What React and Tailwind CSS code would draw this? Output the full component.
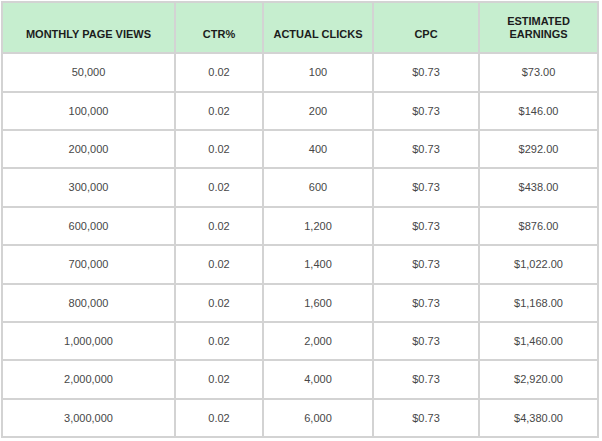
import React from "react";

const rows = [
  ["50,000", "0.02", "100", "$0.73", "$73.00"],
  ["100,000", "0.02", "200", "$0.73", "$146.00"],
  ["200,000", "0.02", "400", "$0.73", "$292.00"],
  ["300,000", "0.02", "600", "$0.73", "$438.00"],
  ["600,000", "0.02", "1,200", "$0.73", "$876.00"],
  ["700,000", "0.02", "1,400", "$0.73", "$1,022.00"],
  ["800,000", "0.02", "1,600", "$0.73", "$1,168.00"],
  ["1,000,000", "0.02", "2,000", "$0.73", "$1,460.00"],
  ["2,000,000", "0.02", "4,000", "$0.73", "$2,920.00"],
  ["3,000,000", "0.02", "6,000", "$0.73", "$4,380.00"],
];

// row heights alternate a little so the lines land where the picture has them
const heights = ["h-[39px]", "h-[38px]", "h-[38px]", "h-[39px]", "h-[38px]", "h-[39px]", "h-[38px]", "h-[38px]", "h-[39px]", "h-[38px]"];

const App = () => {
  const th = "border-r-2 border-b-2 border-[#d3d3d3] bg-[#c6eecf] align-bottom pb-[11px] px-1 text-center text-[11px] leading-[13px] font-bold text-[#1c1c1c]";
  const td = "border-r-2 border-b-2 border-[#d3d3d3] align-middle text-center text-[11px] text-[#474747]";

  return (
    <div className="w-[602px] h-[441px] bg-white pt-px pl-px" style={{ fontFamily: '"Liberation Sans", Arial, sans-serif' }}>
      <table className="w-[598px] table-fixed border-separate border-spacing-0 border-l-2 border-t-2 border-[#d3d3d3]">
        <thead>
          <tr className="h-[51px]">
            <th className={`${th} w-[173px]`}>MONTHLY PAGE VIEWS</th>
            <th className={`${th} w-[88px]`}>CTR%</th>
            <th className={`${th} w-[110px]`}>ACTUAL CLICKS</th>
            <th className={`${th} w-[106px]`}>CPC</th>
            <th className={`${th} w-[119px]`}>
              ESTIMATED
              <br />
              EARNINGS
            </th>
          </tr>
        </thead>
        <tbody>
          {rows.map((r, i) => (
            <tr key={i} className={heights[i]}>
              {r.map((c, j) => (
                <td key={j} className={td}>
                  {c}
                </td>
              ))}
            </tr>
          ))}
        </tbody>
      </table>
    </div>
  );
};

export default App;
